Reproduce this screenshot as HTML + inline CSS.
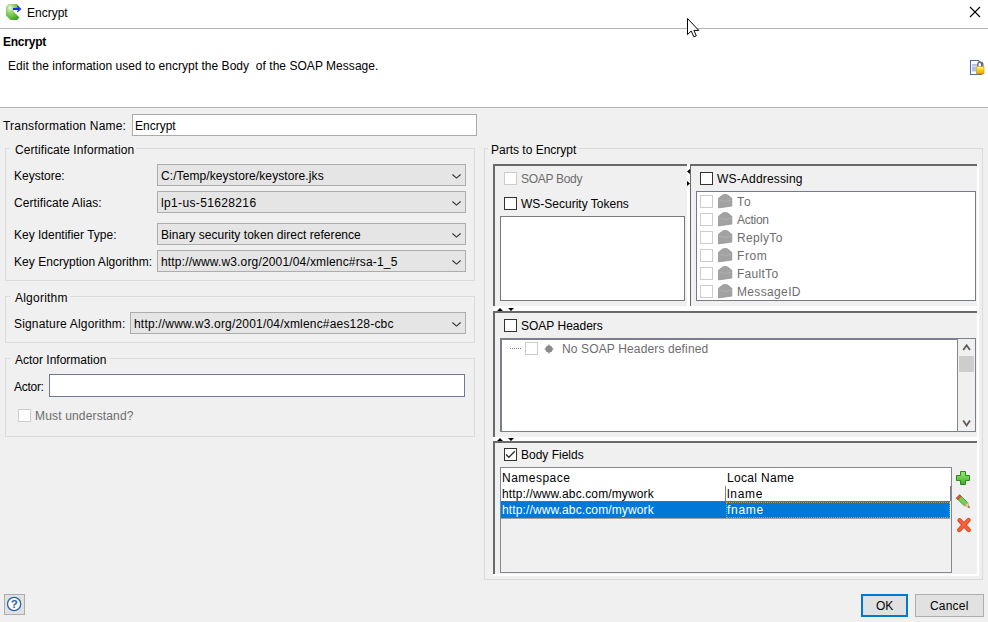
<!DOCTYPE html>
<html><head><meta charset="utf-8">
<style>
*{margin:0;padding:0;box-sizing:border-box}
html,body{width:988px;height:622px;overflow:hidden;background:#f0f0f0;font-family:"Liberation Sans",sans-serif;font-size:12px;color:#000}
.a{position:absolute}
.t{position:absolute;font-size:12px;line-height:14px;white-space:pre}
.g{position:absolute;border:1px solid #dcdcdc}
.gl{position:absolute;background:#f0f0f0;padding:0 2px 0 5px;line-height:14px;white-space:pre}
.combo{position:absolute;background:#e5e5e5;border:1px solid #adadad;height:22px}
.combo span{position:absolute;left:3px;top:4px;line-height:14px;white-space:pre}
.combo svg{position:absolute;right:4px;top:9px}
.inp{position:absolute;background:#fff;border:1px solid #ababab}
.cb{position:absolute;width:13px;height:13px;background:#fff;border:1px solid #333}
.cbd{position:absolute;width:13px;height:13px;background:#fff;border:1px solid #cccccc}
.dis{color:#6d6d6d}
.dk{position:absolute;background:#696969}
.wh{position:absolute;background:#fff}
.btn{position:absolute;background:#e1e1e1;border:1px solid #adadad}
</style></head><body>
<!-- title bar -->
<div class="a" style="left:0;top:0;width:988px;height:28px;background:#fff"></div>
<svg class="a" style="left:0;top:0" width="24" height="24" viewBox="0 0 24 24">
 <defs><radialGradient id="gg" cx="0.3" cy="0.25" r="0.85"><stop offset="0" stop-color="#f0f8e8"/><stop offset="0.3" stop-color="#9fd67a"/><stop offset="0.7" stop-color="#62bb3a"/><stop offset="1" stop-color="#3f9e22"/></radialGradient></defs>
 <path d="M8.5 4 H17 L19 6.5 V8 H13 L13.5 11.5 L19.5 17.5 L17 20 H10.5 L6 15.5 V7 Z" fill="url(#gg)"/>
 <rect x="13" y="8" width="6.5" height="2" fill="#1530e0"/>
 <path d="M17.3 6.3 L20.5 9 L17.3 11.7" stroke="#1530e0" stroke-width="1.3" fill="none"/>
</svg>
<div class="t" style="left:27px;top:6px">Encrypt</div>
<svg class="a" style="left:969px;top:6px" width="12" height="12" viewBox="0 0 12 12"><path d="M1 1 L11 11 M11 1 L1 11" stroke="#000" stroke-width="1.1"/></svg>
<div class="a" style="left:0;top:28px;width:988px;height:1px;background:#b4b4b4"></div>
<!-- header -->
<div class="a" style="left:0;top:29px;width:988px;height:78px;background:#fff"></div>
<div class="t" style="left:3px;top:35px;font-weight:bold;letter-spacing:-0.233px">Encrypt</div>
<div class="t" style="left:8px;top:59px;letter-spacing:0.036px">Edit the information used to encrypt the Body  of the SOAP Message.</div>
<svg class="a" style="left:969px;top:59px" width="17" height="17" viewBox="0 0 17 17">
 <defs><linearGradient id="lg" x1="0" y1="0" x2="0" y2="1"><stop offset="0" stop-color="#fff8a0"/><stop offset="0.5" stop-color="#f5d000"/><stop offset="1" stop-color="#e0a800"/></linearGradient></defs>
 <path d="M1.5 1.5 H9.5 L12.5 4.5 V15.5 H1.5 Z" fill="#fff" stroke="#5868a8" stroke-width="1.1"/>
 <rect x="3" y="5.5" width="5" height="1" fill="#7a88c0"/>
 <rect x="3" y="7.5" width="4" height="5" fill="#b4bee2"/>
 <path d="M8.8 8 V5.6 A2.5 2.5 0 0 1 13.8 5.6 V8" stroke="#6a6a6a" stroke-width="1.4" fill="none"/>
 <rect x="7.5" y="7.5" width="7.5" height="7.5" rx="0.5" fill="url(#lg)" stroke="#b89000" stroke-width="0.6"/>
</svg>
<div class="a" style="left:0;top:107px;width:988px;height:1px;background:#b4b4b4"></div>

<!-- Transformation name -->
<div class="t" style="left:3px;top:119px;letter-spacing:0.211px">Transformation Name:</div>
<div class="inp" style="left:132px;top:114px;width:345px;height:22px"></div>
<div class="t" style="left:135px;top:119px">Encrypt</div>

<!-- Certificate group -->
<div class="g" style="left:5px;top:148px;width:470px;height:133px"></div>
<div class="gl" style="left:10px;top:143px;letter-spacing:0.082px">Certificate Information</div>
<div class="t" style="left:14px;top:169px">Keystore:</div>
<div class="combo" style="left:157px;top:164px;width:309px"><span style="letter-spacing:0.093px">C:/Temp/keystore/keystore.jks</span><svg width="9" height="5" viewBox="0 0 9 5"><path d="M0.4 0.5 L4.5 4.1 L8.6 0.5" stroke="#333" fill="none" stroke-width="1.15"/></svg></div>
<div class="t" style="left:14px;top:196px;letter-spacing:0.094px">Certificate Alias:</div>
<div class="combo" style="left:157px;top:191px;width:309px"><span style="letter-spacing:0.357px">lp1-us-51628216</span><svg width="9" height="5" viewBox="0 0 9 5"><path d="M0.4 0.5 L4.5 4.1 L8.6 0.5" stroke="#333" fill="none" stroke-width="1.15"/></svg></div>
<div class="t" style="left:14px;top:228px">Key Identifier Type:</div>
<div class="combo" style="left:157px;top:223px;width:309px"><span style="letter-spacing:0.046px">Binary security token direct reference</span><svg width="9" height="5" viewBox="0 0 9 5"><path d="M0.4 0.5 L4.5 4.1 L8.6 0.5" stroke="#333" fill="none" stroke-width="1.15"/></svg></div>
<div class="t" style="left:14px;top:255px;letter-spacing:0.033px">Key Encryption Algorithm:</div>
<div class="combo" style="left:157px;top:250px;width:309px"><span style="letter-spacing:0.159px">http://www.w3.org/2001/04/xmlenc#rsa-1_5</span><svg width="9" height="5" viewBox="0 0 9 5"><path d="M0.4 0.5 L4.5 4.1 L8.6 0.5" stroke="#333" fill="none" stroke-width="1.15"/></svg></div>

<!-- Algorithm group -->
<div class="g" style="left:5px;top:296px;width:470px;height:47px"></div>
<div class="gl" style="left:10px;top:291px;letter-spacing:0.225px">Algorithm</div>
<div class="t" style="left:14px;top:317px;letter-spacing:0.174px">Signature Algorithm:</div>
<div class="combo" style="left:130px;top:312px;width:336px"><span style="letter-spacing:0.19px">http://www.w3.org/2001/04/xmlenc#aes128-cbc</span><svg width="9" height="5" viewBox="0 0 9 5"><path d="M0.4 0.5 L4.5 4.1 L8.6 0.5" stroke="#333" fill="none" stroke-width="1.15"/></svg></div>

<!-- Actor group -->
<div class="g" style="left:5px;top:358px;width:470px;height:79px"></div>
<div class="gl" style="left:10px;top:353px">Actor Information</div>
<div class="t" style="left:14px;top:380px;letter-spacing:-0.28px">Actor:</div>
<div class="inp" style="left:49px;top:374px;width:416px;height:23px;border-color:#6a7a90"></div>
<div class="cbd" style="left:18px;top:409px"></div>
<div class="t dis" style="left:35px;top:409px;letter-spacing:0.16px">Must understand?</div>

<!-- Parts to Encrypt group -->
<div class="g" style="left:484px;top:148px;width:499px;height:432px"></div>
<div class="gl" style="padding-left:3px;left:488px;top:143px">Parts to Encrypt</div>

<!-- top panel frame -->
<div class="dk" style="left:493px;top:164px;width:194px;height:2px"></div>
<div class="dk" style="left:690px;top:164px;width:287px;height:2px"></div>
<div class="dk" style="left:493px;top:164px;width:2px;height:142px"></div>
<div class="wh" style="left:977px;top:164px;width:2px;height:142px"></div>
<div class="wh" style="left:687px;top:164px;width:3px;height:142px"></div>
<div class="dk" style="left:690px;top:164px;width:1px;height:142px"></div>
<svg class="a" style="left:686px;top:168px" width="5" height="20" viewBox="0 0 5 20"><path d="M1 3.5 L4 1 V6 Z M4 15.5 L1 13 V18 Z" fill="#000"/></svg>

<div class="cbd" style="left:504px;top:172px"></div>
<div class="t dis" style="left:521px;top:172px;letter-spacing:-0.288px">SOAP Body</div>
<div class="cb" style="left:504px;top:197px"></div>
<div class="t" style="left:521px;top:197px">WS-Security Tokens</div>
<div class="inp" style="left:500px;top:216px;width:185px;height:85px;border-color:#787878"></div>

<div class="cb" style="left:700px;top:172px"></div>
<div class="t" style="left:717px;top:172px;letter-spacing:0.175px">WS-Addressing</div>
<div class="inp" style="left:696px;top:191px;width:280px;height:110px;border-color:#767a88"></div>
<div class="cbd" style="left:700px;top:195px"></div>
<svg class="a" style="left:718px;top:194px" width="15" height="15" viewBox="0 0 15 15"><path d="M0.5 4.2 L5.5 0.4 H8.8 L13.8 4.2 V12.1 L0.5 13.9 Z" fill="#a2a2a2" stroke="#8e8e8e" stroke-width="0.7"/><path d="M1 6 Q7 9 13.5 6" stroke="#b4b4b4" stroke-width="0.7" fill="none"/></svg>
<div class="t dis" style="left:737px;top:195px;letter-spacing:1.0px">To</div>
<div class="cbd" style="left:700px;top:213px"></div>
<svg class="a" style="left:718px;top:212px" width="15" height="15" viewBox="0 0 15 15"><path d="M0.5 4.2 L5.5 0.4 H8.8 L13.8 4.2 V12.1 L0.5 13.9 Z" fill="#a2a2a2" stroke="#8e8e8e" stroke-width="0.7"/><path d="M1 6 Q7 9 13.5 6" stroke="#b4b4b4" stroke-width="0.7" fill="none"/></svg>
<div class="t dis" style="left:737px;top:213px;letter-spacing:-0.28px">Action</div>
<div class="cbd" style="left:700px;top:231px"></div>
<svg class="a" style="left:718px;top:230px" width="15" height="15" viewBox="0 0 15 15"><path d="M0.5 4.2 L5.5 0.4 H8.8 L13.8 4.2 V12.1 L0.5 13.9 Z" fill="#a2a2a2" stroke="#8e8e8e" stroke-width="0.7"/><path d="M1 6 Q7 9 13.5 6" stroke="#b4b4b4" stroke-width="0.7" fill="none"/></svg>
<div class="t dis" style="left:737px;top:231px;letter-spacing:0.333px">ReplyTo</div>
<div class="cbd" style="left:700px;top:249px"></div>
<svg class="a" style="left:718px;top:248px" width="15" height="15" viewBox="0 0 15 15"><path d="M0.5 4.2 L5.5 0.4 H8.8 L13.8 4.2 V12.1 L0.5 13.9 Z" fill="#a2a2a2" stroke="#8e8e8e" stroke-width="0.7"/><path d="M1 6 Q7 9 13.5 6" stroke="#b4b4b4" stroke-width="0.7" fill="none"/></svg>
<div class="t dis" style="left:737px;top:249px;letter-spacing:0.567px">From</div>
<div class="cbd" style="left:700px;top:267px"></div>
<svg class="a" style="left:718px;top:266px" width="15" height="15" viewBox="0 0 15 15"><path d="M0.5 4.2 L5.5 0.4 H8.8 L13.8 4.2 V12.1 L0.5 13.9 Z" fill="#a2a2a2" stroke="#8e8e8e" stroke-width="0.7"/><path d="M1 6 Q7 9 13.5 6" stroke="#b4b4b4" stroke-width="0.7" fill="none"/></svg>
<div class="t dis" style="left:737px;top:267px;letter-spacing:0.283px">FaultTo</div>
<div class="cbd" style="left:700px;top:285px"></div>
<svg class="a" style="left:718px;top:284px" width="15" height="15" viewBox="0 0 15 15"><path d="M0.5 4.2 L5.5 0.4 H8.8 L13.8 4.2 V12.1 L0.5 13.9 Z" fill="#a2a2a2" stroke="#8e8e8e" stroke-width="0.7"/><path d="M1 6 Q7 9 13.5 6" stroke="#b4b4b4" stroke-width="0.7" fill="none"/></svg>
<div class="t dis" style="left:737px;top:285px;letter-spacing:0.35px">MessageID</div>


<!-- sash 1 -->
<div class="wh" style="left:493px;top:306px;width:486px;height:5px"></div>
<svg class="a" style="left:495px;top:306px" width="22" height="6" viewBox="0 0 22 6"><path d="M2 5 L5 2 L8 5 Z M13 2 H19 L16 5 Z" fill="#000"/></svg>

<!-- middle panel -->
<div class="dk" style="left:493px;top:311px;width:484px;height:2px"></div>
<div class="dk" style="left:493px;top:311px;width:2px;height:126px"></div>
<div class="wh" style="left:977px;top:311px;width:2px;height:126px"></div>
<div class="cb" style="left:504px;top:319px"></div>
<div class="t" style="left:521px;top:319px">SOAP Headers</div>
<div class="inp" style="left:500px;top:338px;width:476px;height:94px;border:1px solid #7a7f8a;border-top-width:2px;border-left-width:2px"></div>
<div class="a" style="left:957px;top:339px;width:1px;height:92px;background:#828790"></div>
<div class="a" style="left:958px;top:339px;width:17px;height:92px;background:#f0f0f0"></div>
<div class="a" style="left:959px;top:356px;width:15px;height:16px;background:#cdcdcd"></div>
<svg class="a" style="left:962px;top:342px" width="9" height="10" viewBox="0 0 9 10"><path d="M1.2 8.1 L4.6 3.3 L8 8.1" stroke="#5a5a5a" stroke-width="1.8" fill="none"/></svg>
<svg class="a" style="left:962px;top:417px" width="9" height="10" viewBox="0 0 9 10"><path d="M1.2 3.6 L4.6 8.4 L8 3.6" stroke="#5a5a5a" stroke-width="1.8" fill="none"/></svg>
<svg class="a" style="left:509px;top:347px" width="14" height="3"><path d="M1 1.5 H12" stroke="#808080" stroke-dasharray="1 1"/></svg>
<div class="cbd" style="left:525px;top:342px"></div>
<svg class="a" style="left:544px;top:344px" width="10" height="10" viewBox="0 0 10 10"><circle cx="5" cy="5" r="3.6" fill="#8a8a8a"/><path d="M5 0.5 V9.5 M0.5 5 H9.5" stroke="#8a8a8a" stroke-width="1.2"/></svg>
<div class="t dis" style="left:562px;top:342px;letter-spacing:0.136px">No SOAP Headers defined</div>

<!-- sash 2 -->
<div class="wh" style="left:493px;top:437px;width:486px;height:4px"></div>
<svg class="a" style="left:495px;top:436px" width="22" height="6" viewBox="0 0 22 6"><path d="M2 5 L5 2 L8 5 Z M13 2 H19 L16 5 Z" fill="#000"/></svg>

<!-- bottom panel -->
<div class="dk" style="left:493px;top:441px;width:484px;height:2px"></div>
<div class="dk" style="left:493px;top:441px;width:2px;height:134px"></div>
<div class="wh" style="left:977px;top:441px;width:2px;height:135px"></div>
<div class="wh" style="left:493px;top:574px;width:486px;height:2px"></div>
<div class="cb" style="left:504px;top:448px"></div>
<svg class="a" style="left:504px;top:448px" width="13" height="13" viewBox="0 0 13 13"><path d="M2 6.4 L4.9 9.2 L10.8 3.2" stroke="#333" stroke-width="1.4" fill="none"/></svg>
<div class="t" style="left:521px;top:448px">Body Fields</div>
<div class="a" style="left:500px;top:467px;width:452px;height:106px;background:#f0f0f0;border:1px solid #828790"></div>
<div class="a" style="left:501px;top:468px;width:450px;height:33px;background:#fff"></div>
<div class="a" style="left:501px;top:501px;width:449px;height:1px;background:#696969"></div>
<div class="a" style="left:501px;top:502px;width:449px;height:16px;background:#0078d7"></div>
<div class="a" style="left:501px;top:518px;width:449px;height:1px;background:#a0a0a0"></div>
<div class="a" style="left:725px;top:486px;width:1px;height:15px;background:#808080"></div>
<div class="a" style="left:950px;top:486px;width:1px;height:15px;background:#808080"></div>
<div class="a" style="left:726px;top:502px;width:224px;height:16px;border:1px dotted #ff8c00"></div>
<div class="t" style="left:502px;top:471px;letter-spacing:0.475px">Namespace</div>
<div class="t" style="left:727px;top:471px;letter-spacing:0.322px">Local Name</div>
<div class="t" style="left:502px;top:487px;letter-spacing:0.125px">http://www.abc.com/mywork</div>
<div class="t" style="left:727px;top:487px;letter-spacing:0.7px">lname</div>
<div class="t" style="left:502px;top:503px;color:#fff;letter-spacing:0.125px">http://www.abc.com/mywork</div>
<div class="t" style="left:727px;top:503px;color:#fff;letter-spacing:0.7px">fname</div>
<!-- icons -->
<svg class="a" style="left:955px;top:470px" width="16" height="16" viewBox="0 0 16 16"><defs><linearGradient id="pg" x1="0" y1="0" x2="0" y2="1"><stop offset="0" stop-color="#9be870"/><stop offset="1" stop-color="#3fae2a"/></linearGradient></defs><path d="M5.5 1.5 H10.5 V5.5 H14.5 V10.5 H10.5 V14.5 H5.5 V10.5 H1.5 V5.5 H5.5 Z" fill="url(#pg)" stroke="#2a8a1e" stroke-width="1"/></svg>
<svg class="a" style="left:955px;top:493px" width="17" height="17" viewBox="0 0 17 17">
<path d="M1.37 5.13 L4.63 1.87 L12.68 9.57 L9.42 12.83 Z" fill="#72d24e" stroke="#3a8f2e" stroke-width="0.8"/>
<path d="M1.37 5.13 L4.63 1.87 L6.3 3.5 L3.0 6.8 Z" fill="#e8553a" stroke="#b03a20" stroke-width="0.6"/>
<path d="M12.68 9.57 L9.42 12.83 L15 15 Z" fill="#efc89a" stroke="#b89060" stroke-width="0.5"/>
<path d="M13.3 13.1 L15 15 L12.8 14.1 Z" fill="#404040"/>
</svg>
<svg class="a" style="left:956px;top:517px" width="16" height="16" viewBox="0 0 16 16"><path d="M3.5 3.2 L12.8 13 M12.6 3 L3.2 13" stroke="#d8401c" stroke-width="4.2" stroke-linecap="round"/><path d="M3.5 3.2 L12.8 13 M12.6 3 L3.2 13" stroke="#f4613a" stroke-width="2.6" stroke-linecap="round"/></svg>

<!-- bottom buttons -->
<div class="btn" style="left:4px;top:594px;width:21px;height:21px"></div>
<svg class="a" style="left:4px;top:594px" width="21" height="21" viewBox="0 0 21 21"><circle cx="10.1" cy="10" r="6.6" fill="#fff" stroke="#2262b0" stroke-width="1.3"/><text x="10.2" y="14" font-family="Liberation Sans" font-weight="bold" font-size="11.5" text-anchor="middle" fill="#2262b0">?</text></svg>
<div class="btn" style="left:861px;top:594px;width:47px;height:23px;border:2px solid #0078d7"></div>
<div class="t" style="left:876px;top:599px">OK</div>
<div class="btn" style="left:915px;top:594px;width:69px;height:23px"></div>
<div class="t" style="left:930px;top:599px;letter-spacing:0.2px">Cancel</div>

<!-- cursor -->
<svg class="a" style="left:686px;top:17px" width="14" height="22" viewBox="0 0 14 22"><path d="M1.5 1.5 V17.6 L5.2 14 L7.9 19.8 L10.3 18.8 L7.9 13.4 H12.8 Z" fill="#fff" stroke="#000" stroke-width="1" stroke-linejoin="miter"/></svg>
</body></html>
